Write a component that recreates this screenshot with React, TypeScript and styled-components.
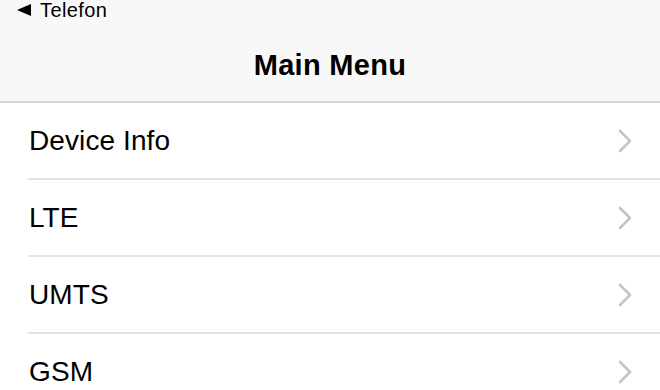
import React from "react";
import styled, { createGlobalStyle } from "styled-components";

const GlobalStyle = createGlobalStyle`
  html, body {
    margin: 0;
    padding: 0;
    background: #ffffff;
    font-family: "Liberation Sans", Arial, sans-serif;
    color: #000000;
    -webkit-font-smoothing: antialiased;
  }
`;

const items = ["Device Info", "LTE", "UMTS", "GSM"];

export default function App() {
  return (
    <>
      <GlobalStyle />
      <Screen>
        <Header>
          <StatusBar>
            <BackArrow viewBox="0 0 13 11">
              <polygon points="13,0 13,11 0,5.5" fill="#000" />
            </BackArrow>
            <span>Telefon</span>
          </StatusBar>
          <NavBar>
            <Title>Main Menu</Title>
          </NavBar>
        </Header>
        <List>
          {items.map((label) => (
            <Row key={label}>
              <RowInner>
                <Label>{label}</Label>
                <Chevron viewBox="0 0 14 24">
                  <polyline
                    points="2,2 12,12 2,22"
                    fill="none"
                    stroke="#c4c4c8"
                    strokeWidth="2.6"
                    strokeLinecap="round"
                    strokeLinejoin="round"
                  />
                </Chevron>
              </RowInner>
            </Row>
          ))}
        </List>
      </Screen>
    </>
  );
}

const Screen = styled.div`
  width: 660px;
  height: 390px;
  overflow: hidden;
  display: flex;
  flex-direction: column;
`;

const Header = styled.header`
  flex-shrink: 0;
  background: #f8f8f8;
  border-bottom: 2px solid #d8d8d8;
  height: 101px;
  display: flex;
  flex-direction: column;
`;

const StatusBar = styled.div`
  height: 20px;
  display: flex;
  align-items: center;
  gap: 9px;
  padding-left: 17px;
  font-size: 20px;
  letter-spacing: 0.4px;
  line-height: 20px;
`;

const BackArrow = styled.svg`
  width: 14px;
  height: 12px;
`;

const NavBar = styled.div`
  flex: 1;
  display: flex;
  align-items: center;
  justify-content: center;
  padding-top: 9px;
`;

const Title = styled.h1`
  margin: 0;
  font-size: 29px;
  font-weight: 700;
  letter-spacing: 0.3px;
`;

const List = styled.ul`
  flex-shrink: 0;
  list-style: none;
  margin: 0;
  padding: 0;
`;

const Row = styled.li`
  padding-left: 28px;
  height: 77px;
`;

const RowInner = styled.div`
  height: 75px;
  display: flex;
  align-items: center;
  justify-content: space-between;
  padding-right: 28px;
  padding-left: 1px;
  border-bottom: 2px solid #e3e3e5;
`;

const Label = styled.span`
  font-size: 28px;
  letter-spacing: 0.1px;
`;

const Chevron = styled.svg`
  width: 14px;
  height: 24px;
`;
